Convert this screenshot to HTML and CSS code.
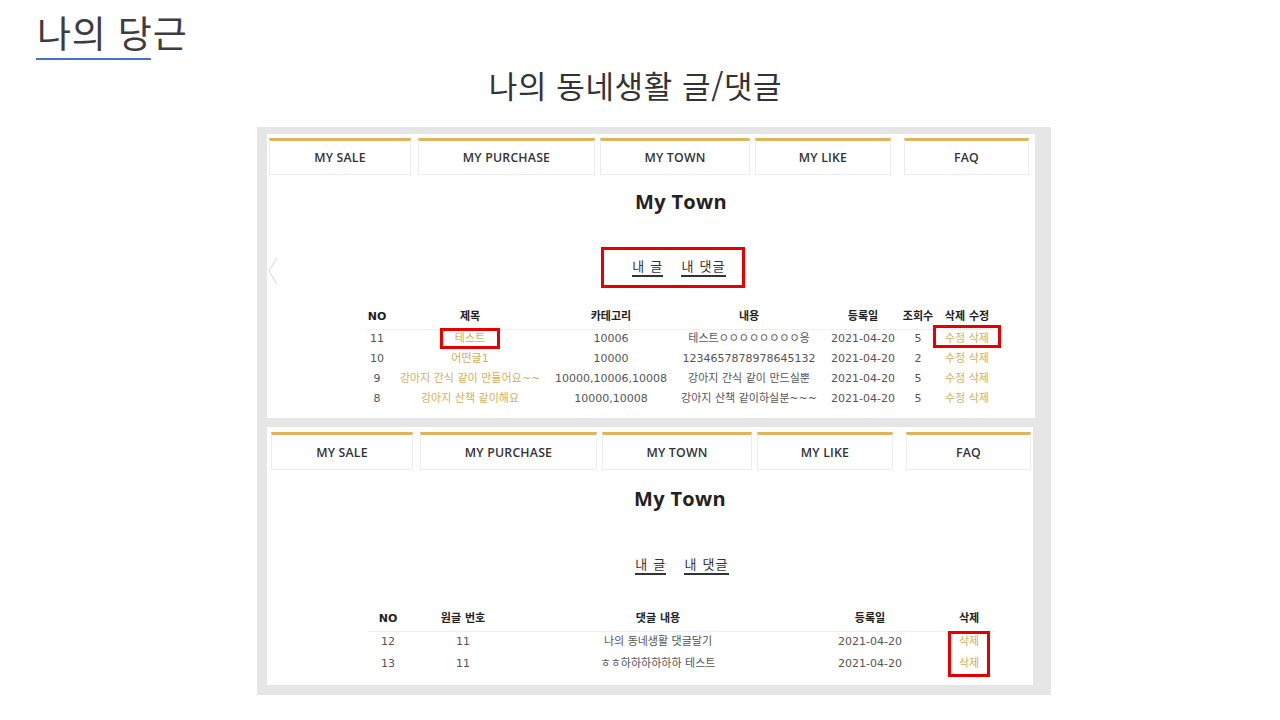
FILE: index.html
```html
<!DOCTYPE html>
<html lang="ko">
<head>
<meta charset="utf-8">
<title>나의 당근</title>
<link rel="stylesheet" href="styles.css">
</head>
<body>
<div class="slide">
  <div class="title-block">
    <h1 class="title">나의 당근</h1>
    <div class="title-rule"></div>
  </div>
  <h2 class="subtitle">나의 동네생활 글/댓글</h2>

  <div class="frame">
    <section class="shot shot-top">
      <svg class="carousel-arrow" width="12" height="30" viewBox="0 0 12 30"><polyline points="10,2 2,15 10,28" fill="none" stroke="#e6e6e6" stroke-width="1.6"/></svg>
      <nav class="tabs">
        <div class="tab tab-sale">MY SALE</div>
        <div class="tab tab-purchase">MY PURCHASE</div>
        <div class="tab tab-town">MY TOWN</div>
        <div class="tab tab-like">MY LIKE</div>
        <div class="tab tab-faq">FAQ</div>
      </nav>
      <div class="content">
        <h3 class="page-title">My Town</h3>
        <div class="links-row">
          <div class="links links-marked">
            <span class="link">내 글</span>
            <span class="link">내 댓글</span>
          </div>
        </div>
        <table class="tbl tbl-posts">
          <colgroup>
            <col class="c-no"><col class="c-title"><col class="c-cat"><col class="c-body"><col class="c-date"><col class="c-views"><col class="c-act">
          </colgroup>
          <thead>
            <tr><th>NO</th><th>제목</th><th>카테고리</th><th>내용</th><th>등록일</th><th>조회수</th><th>삭제 수정</th></tr>
          </thead>
          <tbody>
            <tr><td>11</td><td><span class="gold mark mark-title">테스트</span></td><td>10006</td><td>테스트ㅇㅇㅇㅇㅇㅇㅇㅇ응</td><td>2021-04-20</td><td>5</td><td><span class="gold mark mark-act">수정 삭제</span></td></tr>
            <tr><td>10</td><td><span class="gold">어떤글1</span></td><td>10000</td><td>1234657878978645132</td><td>2021-04-20</td><td>2</td><td><span class="gold">수정 삭제</span></td></tr>
            <tr><td>9</td><td><span class="gold">강아지 간식 같이 만들어요~~</span></td><td>10000,10006,10008</td><td>강아지 간식 같이 만드실뿐</td><td>2021-04-20</td><td>5</td><td><span class="gold">수정 삭제</span></td></tr>
            <tr><td>8</td><td><span class="gold">강아지 산책 같이해요</span></td><td>10000,10008</td><td>강아지 산책 같이하실분~~~</td><td>2021-04-20</td><td>5</td><td><span class="gold">수정 삭제</span></td></tr>
          </tbody>
        </table>
      </div>
    </section>

    <section class="shot shot-bottom">
      <nav class="tabs">
        <div class="tab tab-sale">MY SALE</div>
        <div class="tab tab-purchase">MY PURCHASE</div>
        <div class="tab tab-town">MY TOWN</div>
        <div class="tab tab-like">MY LIKE</div>
        <div class="tab tab-faq">FAQ</div>
      </nav>
      <div class="content">
        <h3 class="page-title">My Town</h3>
        <div class="links-row">
          <div class="links">
            <span class="link">내 글</span>
            <span class="link">내 댓글</span>
          </div>
        </div>
        <table class="tbl tbl-comments">
          <colgroup>
            <col class="k-no"><col class="k-parent"><col class="k-body"><col class="k-date"><col class="k-del">
          </colgroup>
          <thead>
            <tr><th>NO</th><th>원글 번호</th><th>댓글 내용</th><th>등록일</th><th>삭제</th></tr>
          </thead>
          <tbody>
            <tr><td>12</td><td>11</td><td>나의 동네생활 댓글달기</td><td>2021-04-20</td><td><span class="gold mark mark-del">삭제</span></td></tr>
            <tr><td>13</td><td>11</td><td>ㅎㅎ하하하하하하 테스트</td><td>2021-04-20</td><td><span class="gold">삭제</span></td></tr>
          </tbody>
        </table>
      </div>
    </section>
  </div>
</div>
</body>
</html>
```

FILE: styles.css
```css
* { box-sizing: border-box; }

html, body {
  margin: 0;
  padding: 0;
  background: #ffffff;
}

.slide {
  width: 1280px;
  height: 720px;
  overflow: hidden;
  background: #ffffff;
  font-family: "Noto Sans CJK KR", "Noto Sans", sans-serif;
}

.title-block {
  padding: 14px 0 0 36px;
}

.title {
  margin: 0 0 0 1px;
  font-size: 37px;
  line-height: 36px;
  font-weight: 400;
  color: #3d3d3d;
  letter-spacing: 0.8px;
}

.title-rule {
  width: 115px;
  height: 2px;
  margin-top: 8px;
  background: #4472c4;
}

.subtitle {
  margin: 10px 0 0;
  padding-right: 9px;
  text-align: center;
  font-size: 31px;
  line-height: 30px;
  font-weight: 400;
  color: #333333;
  letter-spacing: 0.6px;
}

.frame {
  margin: 27px 0 0 257px;
  width: 794px;
  height: 568px;
  padding: 7px 16px 10px 10px;
  background: #e7e6e6;
  display: flex;
  flex-direction: column;
  gap: 9px;
}

.shot {
  position: relative;
  background: #ffffff;
}

.shot-top {
  height: 284px;
}

.shot-bottom {
  height: 258px;
  margin-right: 2px;
}

.carousel-arrow {
  position: absolute;
  left: 0;
  top: 122px;
}

/* tabs */
.tabs {
  display: flex;
  padding: 4px 0 0 2px;
}

.shot-bottom .tabs {
  padding: 5px 0 0 4px;
}

.tab {
  height: 37px;
  border: 1px solid #ececec;
  border-top: 3px solid #dfb45a;
  display: flex;
  align-items: center;
  justify-content: center;
  font-family: "Open Sans", "DejaVu Sans", sans-serif;
  font-weight: 600;
  font-size: 12.3px;
  color: #333333;
  letter-spacing: 0.2px;
}

.shot-bottom .tab {
  height: 38px;
}

.tab-sale { width: 142px; }
.tab-purchase { width: 177px; margin-left: 7px; }
.tab-town { width: 150px; margin-left: 5px; }
.tab-like { width: 136px; margin-left: 5px; }
.tab-faq { width: 125px; margin-left: 13px; }

/* content */
.content {
  padding-left: 60px;
}

.page-title {
  margin: 15px 0 0;
  text-align: center;
  font-family: "Open Sans", "DejaVu Sans", sans-serif;
  font-weight: 700;
  font-size: 20px;
  line-height: 24px;
  color: #222222;
  letter-spacing: 0.3px;
}

.shot-bottom .page-title {
  margin-top: 17px;
}

.links-row {
  display: flex;
  justify-content: center;
  padding-right: 16px;
  margin-top: 33px;
}

.shot-bottom .links-row {
  padding-right: 8px;
  margin-top: 34px;
}

.links {
  height: 41px;
  display: flex;
  align-items: center;
  gap: 18px;
  padding: 0 16px 0 28px;
  border: 3px solid transparent;
}

.links-marked {
  border-color: #e60000;
}

.link {
  font-size: 13px;
  line-height: 16px;
  letter-spacing: 1.2px;
  color: #333333;
  padding-bottom: 1px;
  border-bottom: 2px solid #333333;
}

/* tables */
.tbl {
  border-collapse: collapse;
  table-layout: fixed;
  font-family: "DejaVu Sans", "Noto Sans CJK KR", sans-serif;
  font-size: 11px;
  color: #555555;
}

.tbl th,
.tbl td {
  padding: 0;
  text-align: center;
  white-space: nowrap;
  line-height: 16px;
}

.tbl th {
  height: 24px;
  font-weight: 700;
  color: #222222;
  border-bottom: 1px solid #eeeeee;
}

.tbl-posts {
  width: 630px;
  margin: 17px 0 0 39px;
}

.tbl-posts td {
  height: 20px;
}

.tbl-comments {
  width: 628px;
  margin: 21px 0 0 41px;
}

.tbl-comments td {
  height: 22px;
}

.c-no { width: 22px; }
.c-title { width: 164px; }
.c-cat { width: 118px; }
.c-body { width: 158px; }
.c-date { width: 70px; }
.c-views { width: 40px; }
.c-act { width: 58px; }

.k-no { width: 40px; }
.k-parent { width: 110px; }
.k-body { width: 280px; }
.k-date { width: 144px; }
.k-del { width: 54px; }

.gold {
  color: #d6ae56;
}

/* red annotation boxes */
.mark {
  position: relative;
}

.mark::after {
  content: "";
  position: absolute;
  border: 3px solid #e60000;
}

.mark-title::after {
  top: -4px;
  bottom: -4px;
  left: -15px;
  right: -15px;
}

.mark-act::after {
  top: -7px;
  bottom: -3px;
  left: -12px;
  right: -12px;
}

.mark-del::after {
  top: -4px;
  bottom: -29px;
  left: -11px;
  right: -11px;
}
```
